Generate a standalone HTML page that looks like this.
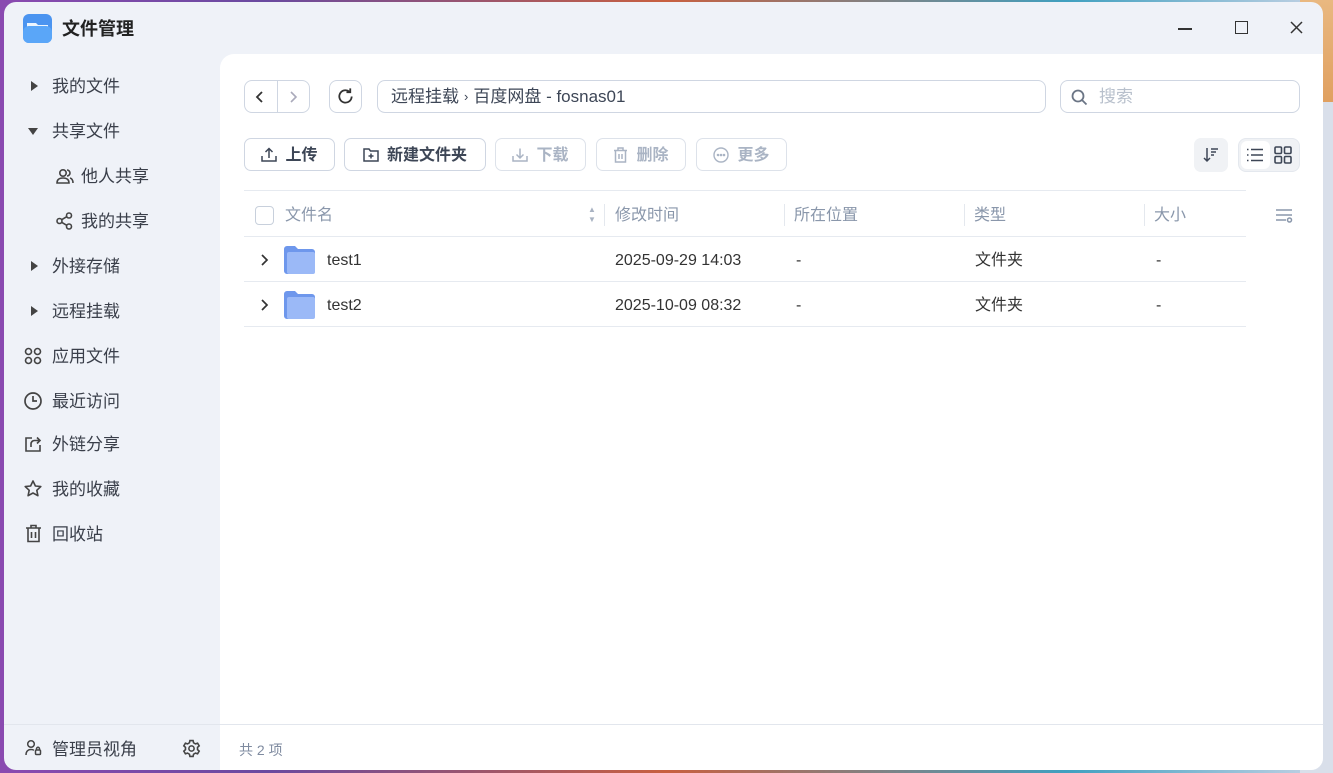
<!DOCTYPE html>
<html><head><meta charset="utf-8"><style>
*{box-sizing:border-box;margin:0;padding:0}
body{width:1333px;height:773px;overflow:hidden;position:relative;font-family:"Liberation Sans","Noto Sans CJK SC",sans-serif;background:linear-gradient(90deg,#8a4ab0 0%,#6a4aa0 20%,#c86040 50%,#40a0c0 80%,#c8d4e6 100%)}
.bgr{position:absolute;left:1300px;top:0;width:33px;height:773px;background:#d9dfea}
.bgo{position:absolute;left:1300px;top:0;width:33px;height:102px;background:linear-gradient(#e9b880,#e0a060)}
.win{position:absolute;left:4px;top:2px;width:1319px;height:768px;background:#eff2f8;border-radius:12px;overflow:hidden}
.abs{position:absolute}
.main{position:absolute;left:216px;top:52px;right:0;bottom:0;background:#fff;border-top-left-radius:14px}
.nav{position:absolute;left:48px;font-size:17px;color:#3a3f4a;line-height:20px;white-space:nowrap;margin-top:1px}
.btn{position:absolute;height:33px;border:1px solid #cfd6e2;border-radius:7px;background:#fff;font-size:16px;font-weight:bold;color:#3d4656;display:flex;align-items:center;justify-content:center;gap:8px;line-height:20px;padding-top:2px}
.btn svg{margin-top:-2px}
.btn.dis{color:#aab4c4;border-color:#dde2ea}
.hd{position:absolute;font-size:16px;color:#8a97ab;line-height:20px;margin-top:2px}
.cell{position:absolute;font-size:16px;color:#333;line-height:20px;margin-top:2px}
.sep{position:absolute;top:150px;width:1px;height:22px;background:#e4e8ee}
.line{position:absolute;left:24px;width:1002px;height:1px;background:#e6eaf0}
</style></head><body>
<div class="bgr"></div><div class="bgo"></div>
<div class="win">
 <svg class="abs" style="left:19px;top:12px" width="29" height="29" viewBox="0 0 29 29"><rect width="29" height="29" rx="6" fill="#4b94f0"/><path d="M4 9 h9 l2 2 h10 v3 H4z" fill="#fff" opacity=".9"/><rect x="0" y="12" width="29" height="17" rx="6" fill="#5aa6f8"/></svg>
 <div class="abs" style="left:58px;top:17px;font-size:18px;font-weight:bold;color:#222;line-height:20px">文件管理</div>
 <div class="abs" style="left:1174px;top:26px;width:14px;height:1.5px;background:#333"></div>
 <div class="abs" style="left:1231px;top:19px;width:13px;height:13px;border:1.5px solid #333"></div>
 <svg class="abs" style="left:1286px;top:19px" width="13" height="13" viewBox="0 0 13 13" stroke="#333" stroke-width="1.5"><path d="M1 1l11 11M12 1L1 12"/></svg>
 <div class="abs" style="left:27px;top:79px;border-left:7px solid #444;border-top:5px solid transparent;border-bottom:5px solid transparent"></div>
 <div class="nav" style="top:74px">我的文件</div>
 <div class="abs" style="left:24px;top:126px;border-top:7px solid #444;border-left:5px solid transparent;border-right:5px solid transparent"></div>
 <div class="nav" style="top:119px">共享文件</div>
 <svg class="abs" style="left:52px;top:166px" width="18" height="16" viewBox="0 0 18 16" fill="none" stroke="#444" stroke-width="1.6"><circle cx="7" cy="5" r="3.2"/><path d="M1 15c0-3.5 2.5-5 6-5s6 1.5 6 5z"/><path d="M11 2a3 3 0 0 1 0 6M14 10c2 .6 3 2 3 5"/></svg>
 <div class="nav" style="left:77px;top:164px">他人共享</div>
 <svg class="abs" style="left:52px;top:210px" width="17" height="18" viewBox="0 0 17 18" fill="none" stroke="#444" stroke-width="1.6"><circle cx="13" cy="3.5" r="2.5"/><circle cx="3.5" cy="9" r="2.5"/><circle cx="13" cy="14.5" r="2.5"/><path d="M5.7 7.7l5-3M5.7 10.3l5 3"/></svg>
 <div class="nav" style="left:77px;top:209px">我的共享</div>
 <div class="abs" style="left:27px;top:259px;border-left:7px solid #444;border-top:5px solid transparent;border-bottom:5px solid transparent"></div>
 <div class="nav" style="top:254px">外接存储</div>
 <div class="abs" style="left:27px;top:304px;border-left:7px solid #444;border-top:5px solid transparent;border-bottom:5px solid transparent"></div>
 <div class="nav" style="top:299px">远程挂载</div>
 <svg class="abs" style="left:20px;top:345px" width="18" height="18" viewBox="0 0 18 18" fill="none" stroke="#444" stroke-width="1.6"><circle cx="4.5" cy="4.5" r="3"/><circle cx="13.5" cy="4.5" r="3"/><circle cx="4.5" cy="13.5" r="3"/><circle cx="13.5" cy="13.5" r="3"/></svg>
 <div class="nav" style="top:344px">应用文件</div>
 <svg class="abs" style="left:19px;top:389px" width="20" height="20" viewBox="0 0 20 20" fill="none" stroke="#444" stroke-width="1.7"><circle cx="10" cy="10" r="8"/><path d="M10 5v5h4"/></svg>
 <div class="nav" style="top:389px">最近访问</div>
 <svg class="abs" style="left:20px;top:433px" width="18" height="18" viewBox="0 0 18 18" fill="none" stroke="#444" stroke-width="1.6"><path d="M8 3H2v13h14v-6"/><path d="M7 12V9c0-2 1.5-3.5 3.5-3.5H16M13 2.5l3 3-3 3"/></svg>
 <div class="nav" style="top:432px">外链分享</div>
 <svg class="abs" style="left:19px;top:477px" width="20" height="20" viewBox="0 0 20 20" fill="none" stroke="#444" stroke-width="1.6" stroke-linejoin="round"><path d="M10 2l2.4 5 5.4.6-4 3.7 1.1 5.4L10 14l-4.9 2.7 1.1-5.4-4-3.7 5.4-.6z"/></svg>
 <div class="nav" style="top:477px">我的收藏</div>
 <svg class="abs" style="left:21px;top:522px" width="17" height="19" viewBox="0 0 17 19" fill="none" stroke="#444" stroke-width="1.6"><path d="M1 4h15M6 4V1.5h5V4M3 4v13.5h11V4M6.5 8v6M10.5 8v6"/></svg>
 <div class="nav" style="top:522px">回收站</div>
 <div class="abs" style="left:0;top:722px;width:1319px;height:1px;background:#e2e6ed"></div>
 <svg class="abs" style="left:21px;top:737px" width="17" height="17" viewBox="0 0 17 17" fill="none" stroke="#444" stroke-width="1.5"><circle cx="6" cy="5" r="3.3"/><path d="M1 16c0-3.5 2-5.5 5-5.5 1.3 0 2.3.3 3 .8"/><rect x="10.5" y="11" width="5" height="4.5" rx="1"/><path d="M11.5 11V9.8a1.5 1.5 0 0 1 3 0V11"/></svg>
 <div class="nav" style="top:737px">管理员视角</div>
 <svg class="abs" style="left:178px;top:737px" width="19" height="19" viewBox="0 0 24 24" fill="none" stroke="#444" stroke-width="2"><circle cx="12" cy="12" r="3.3"/><path d="M10 2h4l.6 2.8 2.4 1.4 2.7-.9 2 3.4-2.1 1.9v2.8l2.1 1.9-2 3.4-2.7-.9-2.4 1.4L14 22h-4l-.6-2.8L7 17.8l-2.7.9-2-3.4 2.1-1.9v-2.8L2.3 8.7l2-3.4 2.7.9 2.4-1.4z"/></svg>
 <div class="main">
  <div class="abs" style="left:24px;top:26px;width:66px;height:33px;border:1px solid #cfd6e2;border-radius:8px"></div>
  <div class="abs" style="left:57px;top:27px;width:1px;height:31px;background:#cfd6e2"></div>
  <svg class="abs" style="left:35px;top:36px" width="10" height="14" viewBox="0 0 10 14" fill="none" stroke="#333" stroke-width="1.8"><path d="M7 2L2 7l5 5"/></svg>
  <svg class="abs" style="left:68px;top:36px" width="10" height="14" viewBox="0 0 10 14" fill="none" stroke="#aab" stroke-width="1.6"><path d="M3 2l5 5-5 5"/></svg>
  <div class="abs" style="left:109px;top:26px;width:33px;height:33px;border:1px solid #cfd6e2;border-radius:8px"></div>
  <svg class="abs" style="left:116px;top:33px" width="19" height="19" viewBox="0 0 20 20" fill="none" stroke="#333" stroke-width="1.9"><path d="M16.5 10A6.5 6.5 0 1 1 14 4.8"/><path d="M15 1.5v4h-4"/></svg>
  <div class="abs" style="left:157px;top:26px;width:669px;height:33px;border:1px solid #cfd6e2;border-radius:8px;padding:0 13px;font-size:17px;color:#3d4656;line-height:31px;display:flex;align-items:center">远程挂载 <span style="font-size:13px;margin:0 5px">›</span> 百度网盘 - fosnas01</div>
  <div class="abs" style="left:840px;top:26px;width:240px;height:33px;border:1px solid #cfd6e2;border-radius:8px;padding:0 38px;font-size:17px;color:#b8c0cc;display:flex;align-items:center;line-height:20px">搜索</div>
  <svg class="abs" style="left:851px;top:35px" width="17" height="17" viewBox="0 0 17 17" fill="none" stroke="#6b7585" stroke-width="1.8"><circle cx="7" cy="7" r="5.5"/><path d="M11 11l4.5 4.5"/></svg>
  <div class="btn" style="left:24px;top:84px;width:91px"><svg width="16" height="15" viewBox="0 0 16 15" fill="none" stroke="#3d4656" stroke-width="1.5"><path d="M1 9v5h14V9M8 11V1.5M4.5 5L8 1.5 11.5 5"/></svg>上传</div>
  <div class="btn" style="left:124px;top:84px;width:142px"><svg width="16" height="15" viewBox="0 0 16 15" fill="none" stroke="#3d4656" stroke-width="1.5"><path d="M1 2h5l1.5 2H15v10H1z"/><path d="M8 6.5v5M5.5 9h5"/></svg>新建文件夹</div>
  <div class="btn dis" style="left:275px;top:84px;width:91px"><svg width="16" height="15" viewBox="0 0 16 15" fill="none" stroke="#aab4c4" stroke-width="1.5"><path d="M1 9v5h14V9M8 1.5V11M4.5 7.5L8 11l3.5-3.5"/></svg>下载</div>
  <div class="btn dis" style="left:376px;top:84px;width:90px"><svg width="15" height="16" viewBox="0 0 15 16" fill="none" stroke="#aab4c4" stroke-width="1.5"><path d="M1 3.5h13M5 3.5V1h5v2.5M2.5 3.5V15h10V3.5M6 7v5M9 7v5"/></svg>删除</div>
  <div class="btn dis" style="left:476px;top:84px;width:91px"><svg width="16" height="16" viewBox="0 0 16 16" fill="none" stroke="#aab4c4" stroke-width="1.4"><circle cx="8" cy="8" r="7"/><circle cx="5" cy="8" r=".6" fill="#aab4c4"/><circle cx="8" cy="8" r=".6" fill="#aab4c4"/><circle cx="11" cy="8" r=".6" fill="#aab4c4"/></svg>更多</div>
  <div class="abs" style="left:974px;top:84px;width:34px;height:34px;background:#f0f2f5;border-radius:7px"></div>
  <svg class="abs" style="left:982px;top:92px" width="18" height="18" viewBox="0 0 18 18" fill="none" stroke="#3d4656" stroke-width="1.5"><path d="M5 2v13M2 12l3 3 3-3M9 3h7M9 6h5M9 9h3"/></svg>
  <div class="abs" style="left:1018px;top:84px;width:62px;height:34px;background:#f0f2f5;border:1px solid #e4e8ee;border-radius:8px"></div>
  <div class="abs" style="left:1021px;top:87px;width:29px;height:28px;background:#fff;border-radius:6px"></div>
  <svg class="abs" style="left:1026px;top:93px" width="18" height="16" viewBox="0 0 18 16" fill="none" stroke="#3d4656" stroke-width="1.6"><path d="M1 2.5h1.5M1 8h1.5M1 13.5h1.5M5 2.5h12M5 8h12M5 13.5h12"/></svg>
  <svg class="abs" style="left:1054px;top:92px" width="18" height="18" viewBox="0 0 18 18" fill="none" stroke="#3d4656" stroke-width="1.6"><rect x="1" y="1" width="6.5" height="6.5" rx="1.2"/><rect x="10.5" y="1" width="6.5" height="6.5" rx="1.2"/><rect x="1" y="10.5" width="6.5" height="6.5" rx="1.2"/><rect x="10.5" y="10.5" width="6.5" height="6.5" rx="1.2"/></svg>
  <div class="line" style="top:136px"></div>
  <div class="abs" style="left:35px;top:152px;width:19px;height:19px;border:1.3px solid #c8d0dc;border-radius:4px"></div>
  <div class="hd" style="left:65px;top:150px">文件名</div>
  <div class="abs" style="left:368px;top:151px;font-size:8px;color:#a8b2c2;line-height:10px">▲<br>▼</div>
  <div class="sep" style="left:384px"></div>
  <div class="hd" style="left:395px;top:150px">修改时间</div>
  <div class="sep" style="left:564px"></div>
  <div class="hd" style="left:574px;top:150px">所在位置</div>
  <div class="sep" style="left:744px"></div>
  <div class="hd" style="left:754px;top:150px">类型</div>
  <div class="sep" style="left:924px"></div>
  <div class="hd" style="left:934px;top:150px">大小</div>
  <svg class="abs" style="left:1055px;top:154px" width="18" height="15" viewBox="0 0 18 15" fill="none" stroke="#8a97ab" stroke-width="1.5"><path d="M1 2h16M1 7h16M1 12h10"/><circle cx="14.5" cy="12" r="2"/></svg>
  <div class="line" style="top:182px"></div>
  <svg class="abs" style="left:40px;top:199px" width="9" height="14" viewBox="0 0 9 14" fill="none" stroke="#333" stroke-width="1.7"><path d="M2 2l5 5-5 5"/></svg>
  <svg class="abs" style="left:64px;top:192px" width="31" height="28" viewBox="0 0 31 28"><path d="M0 3a3 3 0 0 1 3-3h8l3 3h14a3 3 0 0 1 3 3v19a3 3 0 0 1-3 3H3a3 3 0 0 1-3-3z" fill="#6e97ec"/><rect x="3" y="6" width="28" height="22" rx="2" fill="#9bb9f7"/></svg>
  <div class="cell" style="left:107px;top:195px">test1</div>
  <div class="cell" style="left:395px;top:195px">2025-09-29 14:03</div>
  <div class="cell" style="left:576px;top:195px">-</div>
  <div class="cell" style="left:755px;top:195px">文件夹</div>
  <div class="cell" style="left:936px;top:195px">-</div>
  <div class="line" style="top:227px"></div>
  <svg class="abs" style="left:40px;top:244px" width="9" height="14" viewBox="0 0 9 14" fill="none" stroke="#333" stroke-width="1.7"><path d="M2 2l5 5-5 5"/></svg>
  <svg class="abs" style="left:64px;top:237px" width="31" height="28" viewBox="0 0 31 28"><path d="M0 3a3 3 0 0 1 3-3h8l3 3h14a3 3 0 0 1 3 3v19a3 3 0 0 1-3 3H3a3 3 0 0 1-3-3z" fill="#6e97ec"/><rect x="3" y="6" width="28" height="22" rx="2" fill="#9bb9f7"/></svg>
  <div class="cell" style="left:107px;top:240px">test2</div>
  <div class="cell" style="left:395px;top:240px">2025-10-09 08:32</div>
  <div class="cell" style="left:576px;top:240px">-</div>
  <div class="cell" style="left:755px;top:240px">文件夹</div>
  <div class="cell" style="left:936px;top:240px">-</div>
  <div class="line" style="top:272px"></div>
  <div class="abs" style="left:0;top:670px;right:0;height:1px;background:#e2e6ed"></div>
  <div class="abs" style="left:19px;top:687px;font-size:14px;color:#7f8ba0;line-height:18px">共 2 项</div>
 </div>
</div>
</body></html>
